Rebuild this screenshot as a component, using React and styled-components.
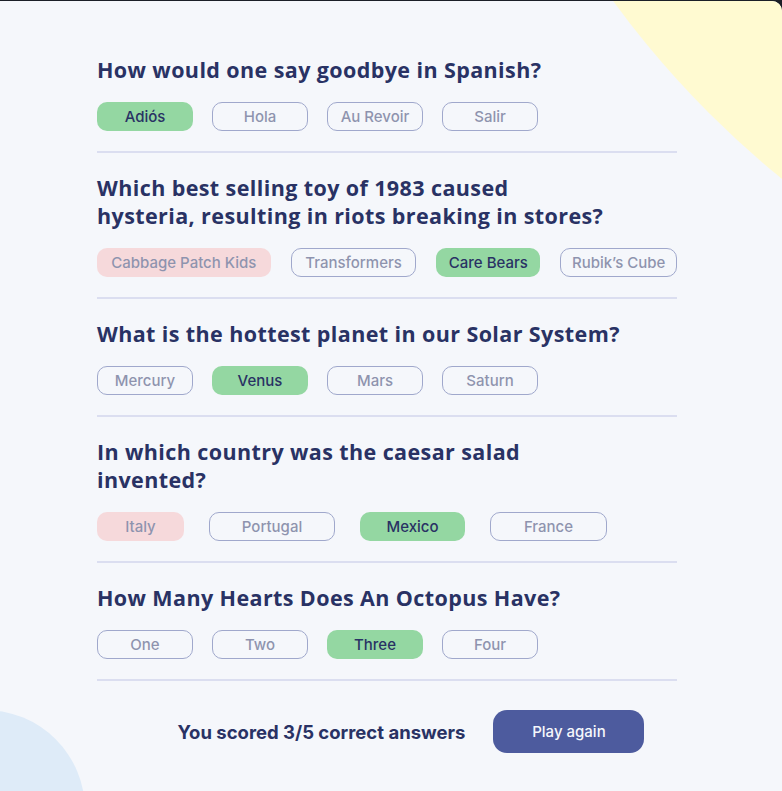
import React from 'react';
import styled, { createGlobalStyle } from 'styled-components';

const questions = [
  {
    lines: ['How would one say goodbye in Spanish?'],
    gap: 19,
    answers: [
      { label: 'Adiós', w: 96, state: 'correct' },
      { label: 'Hola', w: 96 },
      { label: 'Au Revoir', w: 96 },
      { label: 'Salir', w: 96 },
    ],
  },
  {
    lines: ['Which best selling toy of 1983 caused', 'hysteria, resulting in riots breaking in stores?'],
    gap: 20,
    answers: [
      { label: 'Cabbage Patch Kids', w: 174, state: 'wrong' },
      { label: 'Transformers', w: 126 },
      { label: 'Care Bears', w: 104, state: 'correct' },
      { label: 'Rubik’s Cube', w: 117 },
    ],
  },
  {
    lines: ['What is the hottest planet in our Solar System?'],
    gap: 19,
    answers: [
      { label: 'Mercury', w: 96 },
      { label: 'Venus', w: 96, state: 'correct' },
      { label: 'Mars', w: 96 },
      { label: 'Saturn', w: 96 },
    ],
  },
  {
    lines: ['In which country was the caesar salad', 'invented?'],
    gap: 25,
    answers: [
      { label: 'Italy', w: 87, state: 'wrong' },
      { label: 'Portugal', w: 126 },
      { label: 'Mexico', w: 105, state: 'correct' },
      { label: 'France', w: 117 },
    ],
  },
  {
    lines: ['How Many Hearts Does An Octopus Have?'],
    gap: 19,
    answers: [
      { label: 'One', w: 96 },
      { label: 'Two', w: 96 },
      { label: 'Three', w: 96, state: 'correct' },
      { label: 'Four', w: 96 },
    ],
  },
];

const GlobalStyle = createGlobalStyle`
  html, body {
    margin: 0;
    padding: 0;
    background: #1b1f27;
  }
  * { box-sizing: border-box; }
`;

const App = () => {
  return (
    <>
      <GlobalStyle />
      <Page>
        <YellowBlob />
        <BlueBlob />
        <Quiz>
          {questions.map(q => (
            <Question key={q.lines[0]}>
              <Title>
                {q.lines.map((line, i) => (
                  <React.Fragment key={line}>
                    {i > 0 && <br />}
                    {line}
                  </React.Fragment>
                ))}
              </Title>
              <Answers $gap={q.gap}>
                {q.answers.map(a => (
                  <Answer key={a.label} $w={a.w} $state={a.state}>
                    {a.label}
                  </Answer>
                ))}
              </Answers>
            </Question>
          ))}
          <Footer>
            <Score>You scored 3/5 correct answers</Score>
            <PlayButton>Play again</PlayButton>
          </Footer>
        </Quiz>
      </Page>
    </>
  );
};

const Page = styled.div`
  position: relative;
  margin-top: 1px;
  height: 790px;
  overflow: hidden;
  background: #f5f7fb;
  border-top-right-radius: 10px;
  padding: 34px 0 0 97px;
`;

const YellowBlob = styled.div`
  position: absolute;
  left: 431px;
  top: -1508px;
  width: 1898px;
  height: 1898px;
  border-radius: 50%;
  background: #fffad1;
`;

const BlueBlob = styled.div`
  position: absolute;
  left: -115px;
  top: 709px;
  width: 200px;
  height: 200px;
  border-radius: 50%;
  background: #deebf8;
`;

const Quiz = styled.div`
  position: relative;
  width: 580px;
`;

const Question = styled.section`
  padding: 21px 0 20px;
  border-bottom: 2px solid #dbdef0;
`;

const Title = styled.h2`
  margin: 0;
  white-space: nowrap;
  font-family: 'Open Sans', sans-serif;
  font-weight: 700;
  font-size: 21.5px;
  letter-spacing: 0.4px;
  line-height: 28px;
  color: #293264;
`;

const Answers = styled.div`
  display: flex;
  gap: ${p => p.$gap}px;
  margin-top: 18px;
`;

const Answer = styled.button`
  width: ${p => p.$w}px;
  height: 29px;
  padding: 0;
  white-space: nowrap;
  border-radius: 10px;
  font-family: 'Inter', sans-serif;
  font-weight: 500;
  font-size: 15px;
  color: #293264;
  border: 1px solid ${p => (p.$state ? 'transparent' : '#4d5b9e')};
  background: ${p =>
    p.$state === 'correct' ? '#94d7a2' : p.$state === 'wrong' ? '#f8bcbc' : 'transparent'};
  opacity: ${p => (p.$state === 'correct' ? 1 : 0.5)};
`;

const Footer = styled.div`
  display: flex;
  align-items: center;
  justify-content: center;
  gap: 28px;
  padding: 29px 0 0 48px;
`;

const Score = styled.p`
  margin: 0;
  font-family: 'Inter', sans-serif;
  font-weight: 700;
  font-size: 18.5px;
  color: #293264;
`;

const PlayButton = styled.button`
  width: 151px;
  height: 43px;
  border: none;
  border-radius: 14px;
  background: #4d5b9e;
  color: #f5f7fb;
  font-family: 'Inter', sans-serif;
  font-weight: 500;
  font-size: 15px;
`;

export default App;
